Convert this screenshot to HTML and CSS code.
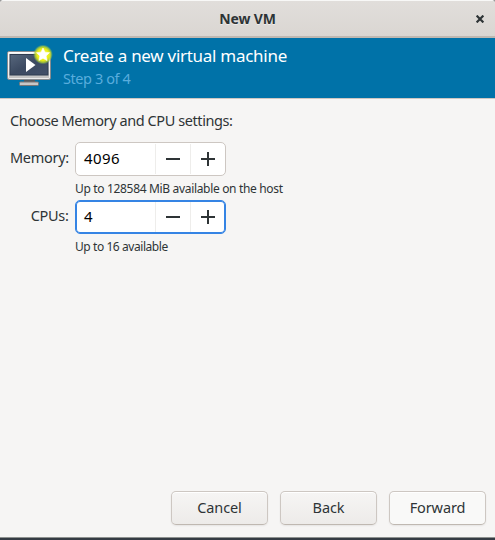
FILE: index.html
```html
<!DOCTYPE html>
<html lang="en">
<head>
<meta charset="utf-8">
<title>New VM</title>
<link rel="stylesheet" href="styles.css">
</head>
<body>
<main class="window">
  <header class="titlebar">
    <h1>New VM</h1>
    <button class="close" aria-label="Close"><svg width="8" height="8" viewBox="0 0 8 8"><path d="M.6.6 7.400 7.400M7.400.6.6 7.400" stroke="#2e3436" stroke-width="2.200"/></svg></button>
  </header>
  <section class="banner">
    <svg class="machine" width="48" height="48" viewBox="0 0 48 48">
      <defs>
        <linearGradient id="frame" x2="0" y2="1"><stop stop-color="#f7f7f7"/><stop offset="1" stop-color="#bfbfbf"/></linearGradient>
        <linearGradient id="screen" x2="1" y2="1"><stop stop-color="#57677d"/><stop offset=".5" stop-color="#3c4a61"/><stop offset="1" stop-color="#43516a"/></linearGradient>
        <radialGradient id="glow"><stop stop-color="#ffff40"/><stop offset=".6" stop-color="#e8ee16"/><stop offset=".8" stop-color="#b4d234" stop-opacity=".8"/><stop offset="1" stop-color="#65a96b" stop-opacity="0"/></radialGradient>
      </defs>
      <path d="M19 35h11v3H19z" fill="#555b60"/>
      <rect x="14.500" y="38" width="19" height="3.500" rx="1" fill="#c7c7c7" stroke="#777"/>
      <rect x="2.500" y="7.500" width="43" height="28" rx="1.500" fill="url(#frame)" stroke="#888c90"/>
      <rect x="3.500" y="8.500" width="41" height="26" rx="1" fill="none" stroke="#fff" stroke-opacity=".7"/>
      <rect x="5" y="10.500" width="38" height="20.500" fill="url(#screen)" stroke="#2f3c50"/>
      <path d="M21 14v14l9.500-7z" fill="#fff"/>
      <circle cx="38" cy="10.500" r="10" fill="url(#glow)"/>
      <path d="m38 4 2 4.200 4.500.5-3.400 3.200 1 4.700-4.100-2.400-4.100 2.400 1-4.700-3.400-3.200 4.500-.5z" fill="#fff" stroke="#fff" stroke-width=".6"/>
    </svg>
    <div class="heading">
      <h2>Create a new virtual machine</h2>
      <p>Step 3 of 4</p>
    </div>
  </section>
  <section class="content">
    <p class="intro">Choose Memory and CPU settings:</p>
    <div class="form">
      <span class="label">Memory:</span>
      <div class="spin"><span class="value">4096</span><span class="step"><svg width="14" height="14"><path d="M0 7h14" /></svg></span><span class="step"><svg width="14" height="14"><path d="M0 7h14M7 0v14" /></svg></span></div>
      <span class="hint">Up to 128584 MiB available on the host</span>
      <span class="label">CPUs:</span>
      <div class="spin focused"><span class="value">4</span><span class="step"><svg width="14" height="14"><path d="M0 7h14" /></svg></span><span class="step"><svg width="14" height="14"><path d="M0 7h14M7 0v14" /></svg></span></div>
      <span class="hint cpu-hint">Up to 16 available</span>
    </div>
  </section>
  <footer class="actions">
    <button>Cancel</button>
    <button>Back</button>
    <button class="forward">Forward</button>
  </footer>
</main>
</body>
</html>
```
FILE: styles.css
```css
* { box-sizing: border-box; }
html { background: #353b43; }
body { margin: 0; background: linear-gradient(#999 4px, #353b43 4px); font-family: "Noto Sans", sans-serif; color: #2e3436; }
h1, h2, p { margin: 0; font-weight: normal; }
button { font: inherit; color: inherit; padding: 0; }
.window { display: flex; flex-direction: column; width: 495px; height: 538px; background: #f6f5f4; border-bottom: 1px solid #8e918f; border-radius: 4px 4px 0 0; overflow: hidden; }
.titlebar { display: grid; grid-template-columns: 30px 1fr 30px; align-items: center; height: 38px; flex: none; background: linear-gradient(#e1dedb, #dad6d2); border-top: 1px solid #f8f8f7; border-bottom: 2px solid #bfb8b1; }
.titlebar h1 { grid-column: 2; font-size: 14px; font-weight: 700; line-height: 20px; text-align: center; letter-spacing: -.15px; text-shadow: 0 1px #eeeceb; }
.close { display: flex; justify-content: center; border: 0; background: none; }
.banner { display: flex; flex: none; height: 61px; padding: 6px 5px; background: #0072a8; border-bottom: 1px solid #cdc7c2; }
.machine { flex: none; }
.heading { padding-left: 10px; white-space: nowrap; }
.heading h2 { font-size: 17px; line-height: 23px; letter-spacing: -.28px; color: #fff; }
.heading p { font-size: 14.5px; line-height: 23px; letter-spacing: -.42px; color: #59addd; }
.content { padding: 11px 10px; flex: 1; font-size: 14.5px; }
.intro { height: 22px; line-height: 21px; letter-spacing: -.42px; white-space: nowrap; }
.form { display: grid; grid-template-columns: 59px 1fr; column-gap: 6px; grid-template-rows: 34px 24px 34px 24px; margin-top: 10px; }
.label { text-align: right; line-height: 31px; letter-spacing: -.3px; padding-right: .5px; }
.spin { display: grid; grid-template-columns: 79px 35px 1fr; width: 151px; height: 34px; border: 1px solid #cdc7c2; border-radius: 5px; background: #fff; color: #000; overflow: hidden; }
.focused { border-color: #3584e4; box-shadow: inset 0 0 0 1px #3584e4; }
.value { padding-left: 8px; line-height: 30px; font-size: 15px; letter-spacing: .4px; }
.step { display: flex; align-items: center; justify-content: center; margin: 1px 0; border-left: 1px solid #eeedeb; }
.step:last-child { padding-right: 1px; }
.step path { stroke: #2e3436; stroke-width: 2; }
.hint { grid-column: 2; font-size: 12px; line-height: 25px; letter-spacing: -.33px; white-space: nowrap; }
.cpu-hint { letter-spacing: -.43px; }
.actions { display: flex; justify-content: flex-end; gap: 12px; padding: 0 9px 12px; }
.actions button { width: 97px; height: 34px; border: 1px solid #cdc7c2; border-bottom-color: #bfb8b1; border-radius: 5px; background: linear-gradient(#f6f5f4, #edebe9); box-shadow: inset 0 1px #fff, 0 1px 2px #00000012; font-size: 14.5px; letter-spacing: -.1px; padding: 0 0 2px; }
.actions .forward { background: #f9f9f8; }
```
